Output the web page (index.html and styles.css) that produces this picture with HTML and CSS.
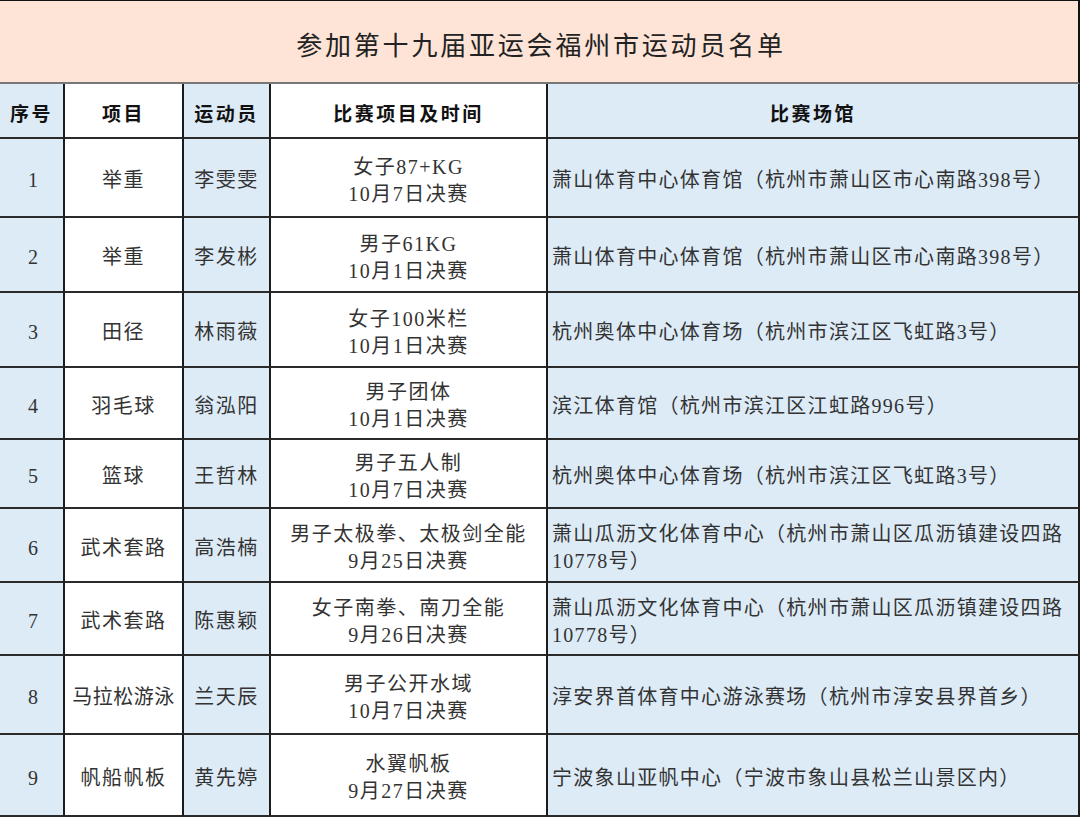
FILE: index.html
```html
<!DOCTYPE html>
<html lang="zh-CN">
<head>
<meta charset="utf-8">
<title>参加第十九届亚运会福州市运动员名单</title>
<link rel="stylesheet" href="styles.css">
</head>
<body>
<div class="sheet">
  <div class="title">参加第十九届亚运会福州市运动员名单</div>

  <div class="cell head blue">序号</div>
  <div class="cell head">项目</div>
  <div class="cell head blue">运动员</div>
  <div class="cell head">比赛项目及时间</div>
  <div class="cell head blue">比赛场馆</div>

  <div class="cell blue num">1</div>
  <div class="cell">举重</div>
  <div class="cell blue">李雯雯</div>
  <div class="cell">女子87+KG<br>10月7日决赛</div>
  <div class="cell blue venue">萧山体育中心体育馆（杭州市萧山区市心南路398号）</div>

  <div class="cell blue num">2</div>
  <div class="cell">举重</div>
  <div class="cell blue">李发彬</div>
  <div class="cell">男子61KG<br>10月1日决赛</div>
  <div class="cell blue venue">萧山体育中心体育馆（杭州市萧山区市心南路398号）</div>

  <div class="cell blue num">3</div>
  <div class="cell">田径</div>
  <div class="cell blue">林雨薇</div>
  <div class="cell">女子100米栏<br>10月1日决赛</div>
  <div class="cell blue venue">杭州奥体中心体育场（杭州市滨江区飞虹路3号）</div>

  <div class="cell blue num">4</div>
  <div class="cell">羽毛球</div>
  <div class="cell blue">翁泓阳</div>
  <div class="cell">男子团体<br>10月1日决赛</div>
  <div class="cell blue venue">滨江体育馆（杭州市滨江区江虹路996号）</div>

  <div class="cell blue num">5</div>
  <div class="cell">篮球</div>
  <div class="cell blue">王哲林</div>
  <div class="cell">男子五人制<br>10月7日决赛</div>
  <div class="cell blue venue">杭州奥体中心体育场（杭州市滨江区飞虹路3号）</div>

  <div class="cell blue num">6</div>
  <div class="cell">武术套路</div>
  <div class="cell blue">高浩楠</div>
  <div class="cell">男子太极拳、太极剑全能<br>9月25日决赛</div>
  <div class="cell blue venue">萧山瓜沥文化体育中心（杭州市萧山区瓜沥镇建设四路<br>10778号）</div>

  <div class="cell blue num">7</div>
  <div class="cell">武术套路</div>
  <div class="cell blue">陈惠颖</div>
  <div class="cell">女子南拳、南刀全能<br>9月26日决赛</div>
  <div class="cell blue venue">萧山瓜沥文化体育中心（杭州市萧山区瓜沥镇建设四路<br>10778号）</div>

  <div class="cell blue num">8</div>
  <div class="cell tight">马拉松游泳</div>
  <div class="cell blue">兰天辰</div>
  <div class="cell">男子公开水域<br>10月7日决赛</div>
  <div class="cell blue venue">淳安界首体育中心游泳赛场（杭州市淳安县界首乡）</div>

  <div class="cell blue num">9</div>
  <div class="cell">帆船帆板</div>
  <div class="cell blue">黄先婷</div>
  <div class="cell">水翼帆板<br>9月27日决赛</div>
  <div class="cell blue venue">宁波象山亚帆中心（宁波市象山县松兰山景区内）</div>
</div>
</body>
</html>
```

FILE: styles.css
```css
html, body {
  margin: 0;
  padding: 0;
  background: #ffffff;
}

.sheet {
  width: 1080px;
  height: 817px;
  box-sizing: border-box;
  border-top: 1px solid #111;
  display: grid;
  grid-template-columns: 65px 119px 87px 277px 532px;
  grid-template-rows: 83px 55px 79px 75px 75px 72px 69px 74px 73px 79px 82px;
  font-family: "Liberation Serif", "Noto Sans CJK SC", serif;
  color: #333;
}

.title {
  grid-column: 1 / -1;
  background: #fde4d6;
  border-bottom: 2px solid #777;
  border-right: 2px solid #111;
  display: flex;
  align-items: center;
  justify-content: center;
  font-size: 26px;
  letter-spacing: 2.8px;
  color: #222;
  padding-top: 4px;
  padding-left: 4px;
  box-sizing: border-box;
}

.cell {
  box-sizing: border-box;
  border-right: 2px solid #1c1c1c;
  border-bottom: 2px solid #2a2a2a;
  background: #ffffff;
  display: flex;
  align-items: center;
  justify-content: center;
  text-align: center;
  font-size: 20px;
  line-height: 27px;
  letter-spacing: 1.5px;
  padding-top: 6px;
}

.cell.blue {
  background: #ddebf7;
}

.cell.head {
  font-family: "Noto Sans CJK SC", sans-serif;
  font-weight: 700;
  font-size: 19px;
  letter-spacing: 2.5px;
  color: #111;
  padding-top: 3px;
}

.cell.num {
  letter-spacing: 0;
  padding-left: 3px;
}

.cell.tight {
  letter-spacing: 0.5px;
}

.cell.venue {
  justify-content: flex-start;
  text-align: left;
  padding-left: 4px;
  letter-spacing: 1.3px;
}
```
